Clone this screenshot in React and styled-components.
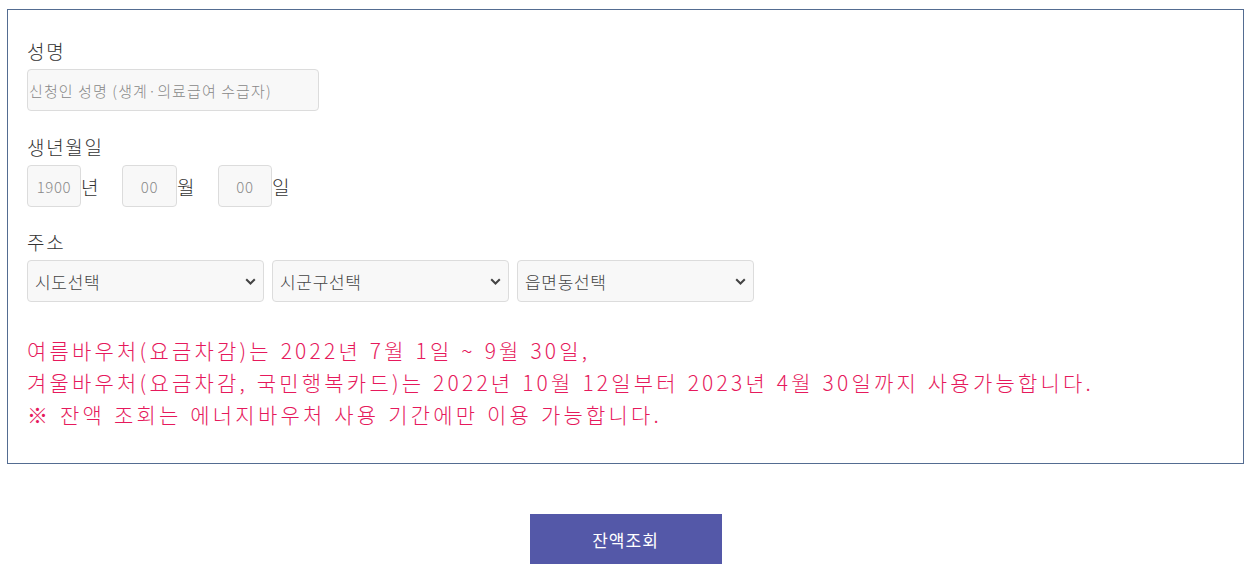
import React from 'react'
import styled, { createGlobalStyle } from 'styled-components';

const GlobalStyle = createGlobalStyle`
    body {
        margin: 0;
        background: #fff;
        font-family: "Noto Sans CJK KR", "Noto Sans", sans-serif;
        color: #333;
    }
`;

function Chevron() {
    return (
        <svg width="11" height="7" viewBox="0 0 11 7">
            <path d="M1.2 1.2 L5.5 5.5 L9.8 1.2" fill="none" stroke="#444" strokeWidth="2" />
        </svg>
    );
}

function Select({ label }) {
    return (
        <SelectBox>
            <span>{label}</span>
            <Chevron />
        </SelectBox>
    );
}

function App() {
    return (
        <Page>
            <GlobalStyle />
            <FormBox>
                <Label>성명</Label>
                <TextInput placeholder="신청인 성명 (생계·의료급여 수급자)" />

                <Label $top={22}>생년월일</Label>
                <DateRow>
                    <SmallInput placeholder="1900" />
                    <Unit>년</Unit>
                    <SmallInput $wide placeholder="00" />
                    <Unit>월</Unit>
                    <SmallInput placeholder="00" />
                    <Unit>일</Unit>
                </DateRow>

                <Label $top={21}>주소</Label>
                <SelectRow>
                    <Select label="시도선택" />
                    <Select label="시군구선택" />
                    <Select label="읍면동선택" />
                </SelectRow>

                <Notice>
                    여름바우처(요금차감)는 2022년 7월 1일 ~ 9월 30일,<br />
                    겨울바우처(요금차감, 국민행복카드)는 2022년 10월 12일부터 2023년 4월 30일까지 사용가능합니다.<br />
                    ※ 잔액 조회는 에너지바우처 사용 기간에만 이용 가능합니다.
                </Notice>
            </FormBox>
            <ButtonRow>
                <SubmitButton>잔액조회</SubmitButton>
            </ButtonRow>
        </Page>
    );
}

export default App;

const Page = styled.div`
    padding: 9px 10px 0 7px;
    width: 1237px;
`;

const FormBox = styled.div`
    border: 1px solid #546c91;
    padding: 27px 19px 33px;
    display: flex;
    flex-direction: column;
    align-items: flex-start;
`;

const Label = styled.div`
    font-size: 19px;
    font-weight: 300;
    letter-spacing: 1.7px;
    line-height: 28px;
    color: #333;
    margin-top: ${p => (p.$top || 0)}px;
    margin-bottom: 4px;
`;

const inputBase = `
    box-sizing: border-box;
    height: 42px;
    border: 1px solid #dcdcdc;
    border-radius: 4px;
    background: #f8f8f8;
    font-family: "Noto Sans CJK KR", "Noto Sans", sans-serif;
    font-size: 15px;
    font-weight: 300;
    color: #333;
    outline: none;
    &::placeholder {
        color: #888;
    }
`;

const TextInput = styled.input`
    ${inputBase}
    width: 292px;
    padding: 0 0 0 1px;
    letter-spacing: 1.1px;
`;

const DateRow = styled.div`
    display: flex;
    align-items: center;
`;

const SmallInput = styled.input`
    ${inputBase}
    width: ${p => (p.$wide ? 55 : 54)}px;
    padding: 0;
    text-align: center;
    letter-spacing: 0.6px;
`;

const Unit = styled.span`
    width: 41px;
    font-size: 19px;
    font-weight: 300;
    color: #333;
    &:last-child {
        width: auto;
    }
`;

const SelectRow = styled.div`
    display: flex;
    gap: 8px;
`;

const SelectBox = styled.div`
    box-sizing: border-box;
    width: 237px;
    height: 42px;
    border: 1px solid #dcdcdc;
    border-radius: 4px;
    background: #f8f8f8;
    padding: 0 7px 0 7px;
    display: flex;
    align-items: center;
    justify-content: space-between;
    font-size: 17px;
    font-weight: 300;
    letter-spacing: 0.7px;
    color: #444;
`;

const Notice = styled.p`
    margin: 32px 0 0;
    font-size: 21px;
    font-weight: 300;
    letter-spacing: 3.2px;
    word-spacing: 1px;
    line-height: 32px;
    color: #e6195c;
`;

const ButtonRow = styled.div`
    display: flex;
    justify-content: center;
    padding-top: 50px;
`;

const SubmitButton = styled.button`
    width: 192px;
    height: 50px;
    border: none;
    background: #5458a8;
    color: #fff;
    font-family: "Noto Sans CJK KR", "Noto Sans", sans-serif;
    font-size: 17px;
    letter-spacing: 1px;
    cursor: pointer;
`;
